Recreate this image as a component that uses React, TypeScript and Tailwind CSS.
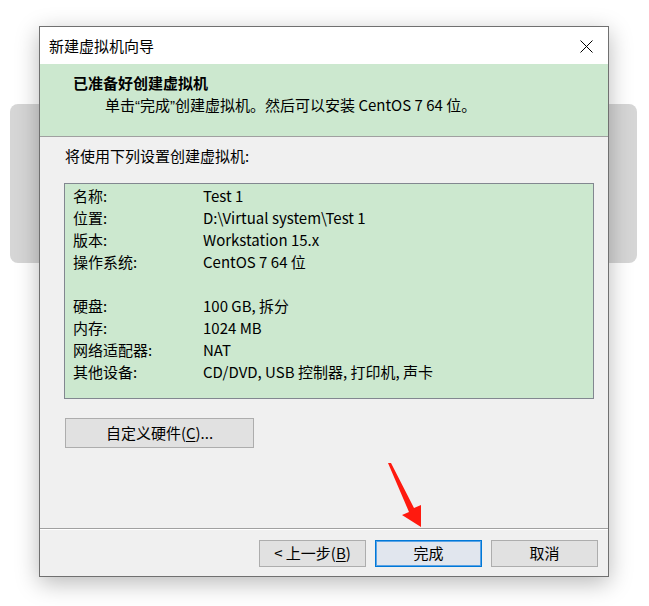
import React from 'react';

const FONT = '"Noto Sans CJK SC", "Noto Sans", sans-serif';

const rows: [string, string][] = [
  ['名称:', 'Test 1'],
  ['位置:', 'D:\\Virtual system\\Test 1'],
  ['版本:', 'Workstation 15.x'],
  ['操作系统:', 'CentOS 7 64 位'],
  ['', ''],
  ['硬盘:', '100 GB, 拆分'],
  ['内存:', '1024 MB'],
  ['网络适配器:', 'NAT'],
  ['其他设备:', 'CD/DVD, USB 控制器, 打印机, 声卡'],
];

function WinButton({ children, primary = false }: { children: React.ReactNode; primary?: boolean }) {
  return (
    <div
      className={`w-[107px] h-[27px] flex items-center justify-center text-[15px] text-black ${
        primary
          ? 'bg-[#e1e6ee] border border-[#0078d7] shadow-[inset_0_0_0_1px_#5aa3e6]'
          : 'bg-[#e1e1e1] border border-[#adadad]'
      }`}
    >
      {children}
    </div>
  );
}

// narrow latin quote marks, as the original font draws them
const Q = ({ c }: { c: string }) => <span style={{ fontFamily: '"Liberation Sans", sans-serif' }}>{c}</span>;

export default function App() {
  return (
    <div className="relative w-[649px] h-[606px] bg-white overflow-hidden" style={{ fontFamily: FONT }}>
      {/* background window behind the dialog */}
      <div className="absolute left-[10px] top-[104px] w-[627px] h-[159px] rounded-lg bg-[#d6d6d6]" />

      {/* dialog window */}
      <div className="absolute left-[39px] top-[26px] w-[570px] h-[551px] border border-[#707070] bg-[#f0f0f0] flex flex-col shadow-[0_6px_22px_rgba(0,0,0,0.28)]">
        {/* title bar */}
        <div className="h-[37px] shrink-0 bg-white flex items-center justify-between pl-[9px] pr-[15px]">
          <span className="text-[15px] leading-[22px] text-black">新建虚拟机向导</span>
          <svg width="13" height="13" viewBox="0 0 13 13" className="mt-[1px]">
            <path d="M0.5 0.5 L12.5 12.5 M12.5 0.5 L0.5 12.5" stroke="#000" strokeWidth="1" fill="none" />
          </svg>
        </div>

        {/* header */}
        <div className="h-[72px] shrink-0 bg-[#cce8cf] pt-[8px]">
          <div className="pl-[33px] text-[15px] leading-[22px] font-bold text-black">已准备好创建虚拟机</div>
          <div className="pl-[65px] text-[15px] leading-[22px] text-black">
            单击<Q c="“" />完成<Q c="”" />创建虚拟机。然后可以安装 CentOS 7 64 位。
          </div>
        </div>
        <div className="h-[1px] shrink-0 bg-[#a0a0a0]" />

        {/* body */}
        <div className="pt-[8px] pl-[25px] text-[15px] leading-[22px] text-black">将使用下列设置创建虚拟机:</div>

        <div className="ml-[24px] mt-[16px] w-[530px] h-[216px] shrink-0 border border-[#828790] bg-[#cce8cf] pt-[1px] pl-[8px]">
          {rows.map(([k, v], i) => (
            <div key={i} className="flex h-[22px] items-center text-[15px] leading-[22px] text-black">
              <span className="w-[130px]">{k}</span>
              <span>{v}</span>
            </div>
          ))}
        </div>

        <div className="ml-[25px] mt-[19px] w-[189px] h-[30px] shrink-0 bg-[#e1e1e1] border border-[#adadad] flex items-center justify-center text-[15px] text-black">
          自定义硬件(<span className="underline underline-offset-2">C</span>)...
        </div>

        <div className="mt-[80px] h-[1px] shrink-0 bg-[#a0a0a0]" />
        <div className="h-[1px] shrink-0 bg-white" />

        <div className="mt-[10px] flex justify-end gap-[9px] pr-[10px]">
          <WinButton>
            &lt;&nbsp;上一步(<span className="underline underline-offset-2">B</span>)
          </WinButton>
          <WinButton primary>完成</WinButton>
          <WinButton>取消</WinButton>
        </div>
      </div>

      {/* red annotation arrow */}
      <svg className="absolute left-0 top-0" width="649" height="606" viewBox="0 0 649 606">
        <polygon points="388,463 391,463 414,508 421,505 421,527 402,515 409,512" fill="#ff1a0f" />
      </svg>
    </div>
  );
}
